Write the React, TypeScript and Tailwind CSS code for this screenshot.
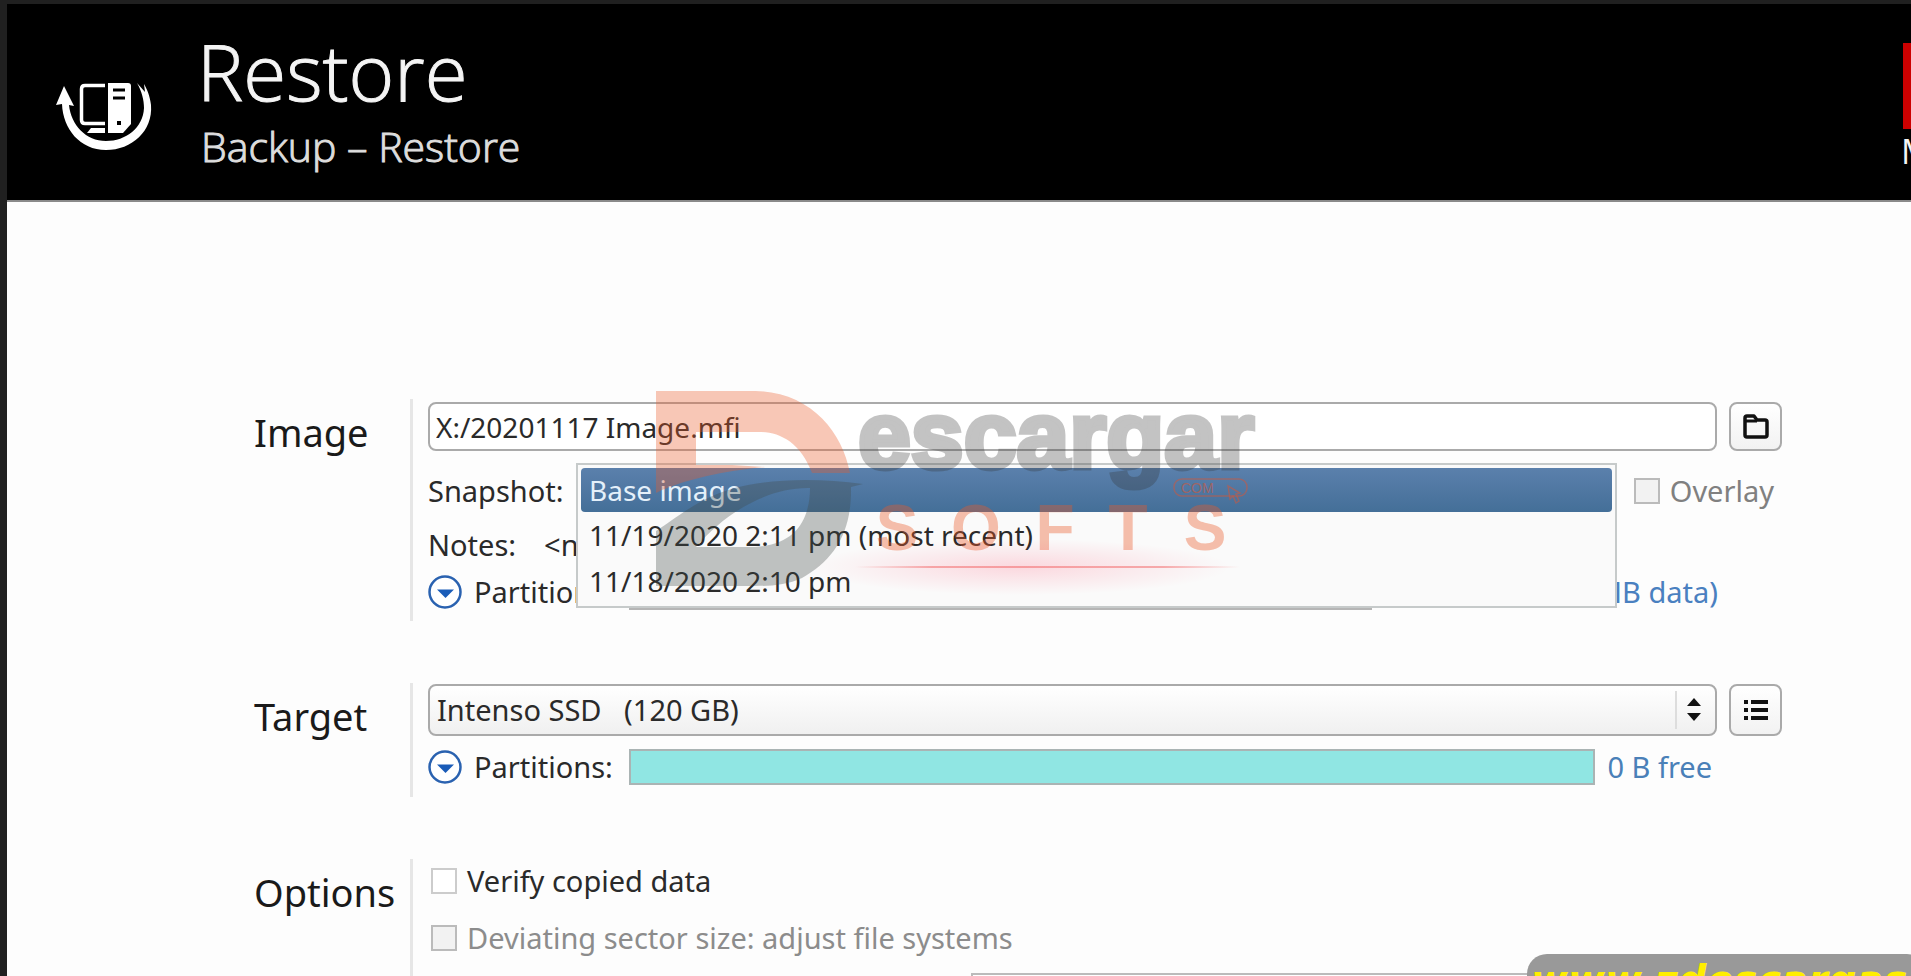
import type { ReactNode } from 'react';

const snapshots = ['Base image', '11/19/2020 2:11 pm (most recent)', '11/18/2020 2:10 pm'];

function RestoreIcon() {
  return (
    <svg width="98" height="70" viewBox="0 0 98 70" aria-hidden="true">
      <path
        d="M6 23 C7 48 24 69 50 69 C76 69 97 50 95 24 C94 15 91 8 88 3 L89 11 L81 2 C86 11 88 19 88 27 C87 47 70 60 50 60 C30 60 15 44 13 24 L18 25 L8 5 L0 24 Z"
        fill="#fff"
      />
      <path d="M49 4.500 H29 Q25.500 4.500 25.500 8 V39 Q25.500 42.500 29 42.500 H49" fill="none" stroke="#fff" strokeWidth="3.500" />
      <path d="M35 47 H49 V52 H31 Z" fill="#fff" />
      <path d="M52 2 H72 Q75 2 75 5 V43 L67 52 H52 Z" fill="#fff" />
      <path d="M57 9 H69 M57 17 H69" stroke="#000" strokeWidth="3" />
      <rect x="61" y="40" width="4" height="4" fill="#000" />
    </svg>
  );
}

function ExpandButton({ label }: { label: string }) {
  return (
    <button type="button" aria-label={label} className="size-[34px] shrink-0">
      <svg width="34" height="34" viewBox="0 0 34 34">
        <circle cx="17" cy="17" r="15.500" fill="#fff" stroke="#2a62b0" strokeWidth="2.500" />
        <path d="M9 14.500 H26 L17.500 23 Z" fill="#1a5cb8" />
      </svg>
    </button>
  );
}

function ToolButton({ label, children }: { label: string; children: ReactNode }) {
  return (
    <button
      type="button"
      aria-label={label}
      className="flex w-[53px] shrink-0 items-center justify-center rounded-lg border-2 border-[#aaa] bg-linear-to-b from-white to-[#f2f2f2]"
    >
      {children}
    </button>
  );
}

function Section({ title, className, children }: { title: string; className: string; children: ReactNode }) {
  return (
    <section className={`grid grid-cols-[156px_minmax(0,1fr)] ${className}`}>
      <h2 className="pt-2 text-[38px] leading-[50px] text-[#1a1a1a]">{title}</h2>
      <div className="border-l-[3px] border-[#e6e6e6] pl-[15px]">{children}</div>
    </section>
  );
}

function Watermark() {
  return (
    <svg
      className="pointer-events-none absolute top-[381px] left-[643px] z-20"
      width="620"
      height="230"
      viewBox="0 0 620 230"
      aria-hidden="true"
    >
      <defs>
        <radialGradient id="glow">
          <stop offset="0" stopColor="#ff5070" stopOpacity="0.2" />
          <stop offset="1" stopColor="#ff5070" stopOpacity="0" />
        </radialGradient>
        <linearGradient id="beam">
          <stop offset="0" stopColor="#f04040" stopOpacity="0" />
          <stop offset="0.2" stopColor="#f04040" stopOpacity="0.4" />
          <stop offset="0.8" stopColor="#f04040" stopOpacity="0.4" />
          <stop offset="1" stopColor="#f04040" stopOpacity="0" />
        </linearGradient>
      </defs>
      <path
        d="M6 6 H105 C160 7 192 46 200 88 H162 C151 58 130 47 110 47 H46 V80 H82 L115 82 C75 86 35 94 6 108 Z"
        fill="#eb5a28"
        fillOpacity="0.34"
      />
      <path
        d="M6 146 C25 134 50 112 85 103 C125 93 168 93 213 99 L201 102 C202 150 182 176 152 193 C137 200 122 201 105 201 H6 Z M46 162 H105 C145 160 160 135 160 103 C118 102 75 128 46 162 Z"
        fill="#404a46"
        fillOpacity="0.32"
        fillRule="evenodd"
      />
      <text
        x="208"
        y="83"
        opacity="0.29"
        fill="#333"
        stroke="#333"
        strokeWidth="5"
        fontSize="95"
        fontWeight="700"
        fontFamily="'Liberation Sans', sans-serif"
      >
        escargar
      </text>
      <text
        x="247 326 405 478 555"
        y="165"
        textAnchor="middle"
        fill="#eb5a28"
        fillOpacity="0.38"
        fontSize="64"
        fontWeight="700"
        fontFamily="'Liberation Sans', sans-serif"
      >
        SOFTS
      </text>
      <g stroke="#d0583c" strokeOpacity="0.55" fill="none" strokeWidth="1.500">
        <rect x="524" y="94" width="73" height="17" rx="8" />
        <path d="M578 101 L580 114 L583 111 L586 118 L589 116 L586 109 L590 108 Z" />
      </g>
      <text x="531" y="108" fill="#d0583c" fillOpacity="0.6" fontSize="14" fontFamily="'Liberation Sans', sans-serif">
        COM
      </text>
      <ellipse cx="370" cy="182" rx="210" ry="28" fill="url(#glow)" />
      <rect x="205" y="181" width="385" height="2" fill="url(#beam)" />
    </svg>
  );
}

export default function App() {
  return (
    <div className="relative flex h-screen flex-col overflow-hidden border-t-4 border-l-[7px] border-[#202020] bg-[#fdfdfd] font-['Noto_Sans',sans-serif] text-[29px] leading-[38px] text-[#2a2a2a]">
      <header className="relative flex h-[198px] shrink-0 border-b-2 border-[#8a8a8a] bg-black font-['Open_Sans',sans-serif] text-[#f4f4f4]">
        <div className="w-[190px] shrink-0 pt-[77px] pl-[49px]">
          <RestoreIcon />
        </div>
        <div className="pt-[21px]">
          <h1 className="text-[78px] leading-[92px] font-light [-webkit-text-stroke:1px]">Restore</h1>
          <p className="mt-1 pl-1 text-[41px] leading-[50px] font-light text-[#ddd] [-webkit-text-stroke:1px]">Backup – Restore</p>
        </div>
        <div className="absolute top-[39px] left-[calc(100%-8px)] w-[86px] whitespace-nowrap">
          <div className="h-[86px] bg-[#cc0000]" />
          <p className="-ml-0.5 text-[34px] leading-[44px]">Menu</p>
        </div>
      </header>

      <main className="flex flex-1 flex-col gap-[62px] pt-[197px] pr-[129px] pl-[247px]">
        <Section title="Image" className="h-[222px] shrink-0">
          <div className="flex gap-3 pt-[3px]">
            <input
              type="text"
              aria-label="Image"
              defaultValue="X:/20201117 Image.mfi"
              className="h-[49px] min-w-0 flex-1 rounded-lg border-2 border-[#aaa] bg-white px-1.5 text-[28px]"
            />
            <ToolButton label="Browse">
              <svg width="30" height="28" viewBox="0 0 30 28" fill="none" stroke="#111" strokeWidth="3.500" strokeLinejoin="round">
                <path d="M4 22 V5 Q4 3 6 3 H13 L16 7 H24 Q26 7 26 9 V22 Q26 24 24 24 H6 Q4 24 4 22 Z" />
                <path d="M5 8 H16" strokeWidth="3" />
              </svg>
            </ToolButton>
          </div>
          <div className="relative mt-3">
            <div className="flex h-14 items-center justify-between">
              <span id="snapshot-label">Snapshot:</span>
              <label className="flex items-center gap-2.5 pr-2 text-[#808080]">
                <input type="checkbox" disabled className="size-[26px] appearance-none border-2 border-[#bbb] bg-[#f2f2f2]" />
                Overlay
              </label>
            </div>
            <div className="flex h-[52px] items-center gap-7">
              <span>Notes:</span>
              <span>&lt;none&gt;</span>
            </div>
            <div className="flex h-[42px] items-center pr-16">
              <ExpandButton label="Show image partitions" />
              <span className="ml-3">Partitions:</span>
              <div className="ml-4 h-[36px] w-[743px] border-2 border-[#b5b5b5] bg-[#90e6e3]" />
              <a href="#data" className="ml-auto text-[#4a80c0]">(512 MB data)</a>
            </div>
            <ul
              role="listbox"
              aria-labelledby="snapshot-label"
              className="absolute top-0 right-[165px] left-[148px] z-10 h-[145px] border-2 border-[#c6caca] bg-[#fafafa] p-[3px] text-[28px]"
            >
              {snapshots.map((name, i) => (
                <li
                  key={name}
                  role="option"
                  aria-selected={i === 0}
                  className={
                    i === 0
                      ? 'h-11 rounded-sm bg-linear-to-b from-[#5b80ac] to-[#446f98] px-2 leading-[44px] text-[#e4f0fa]'
                      : 'h-[46px] px-2 leading-[46px]'
                  }
                >
                  {name}
                </li>
              ))}
            </ul>
          </div>
        </Section>

        <Section title="Target" className="h-[114px] shrink-0">
          <div className="flex gap-3 pt-px">
            <div className="relative min-w-0 flex-1">
              <select
                aria-label="Target"
                className="h-[52px] w-full appearance-none rounded-lg border-2 border-[#aaa] bg-linear-to-b from-white to-[#f0f0f0] px-[7px]"
              >
                <option>{'Intenso SSD\u00a0\u00a0\u00a0(120 GB)'}</option>
              </select>
              <svg className="pointer-events-none absolute top-1.5 right-2" width="34" height="40" viewBox="0 0 34 40">
                <path d="M1 1 V39" stroke="#ddd" strokeWidth="2" />
                <path d="M12 16 L19 8 L26 16 Z M12 23 L19 31 L26 23 Z" fill="#111" />
              </svg>
            </div>
            <ToolButton label="List">
              <svg width="26" height="24" viewBox="0 0 26 24" stroke="#111" strokeWidth="4">
                <path d="M1 4 H5 M8 4 H25 M1 12 H5 M8 12 H25 M1 20 H5 M8 20 H25" />
              </svg>
            </ToolButton>
          </div>
          <div className="mt-3 flex items-center">
            <ExpandButton label="Show target partitions" />
            <span className="ml-3">Partitions:</span>
            <div className="ml-4 h-[36px] flex-1 border-2 border-[#aab4b4] bg-[#90e6e3]" />
            <a href="#free" className="mr-[70px] ml-3 text-[#4a80b8]">0 B free</a>
          </div>
        </Section>

        <Section title="Options" className="flex-1">
          <div className="pt-[3px] pl-[3px]">
            <label className="flex items-center gap-2.5">
              <input type="checkbox" className="size-[26px] appearance-none border-2 border-[#ccc] bg-white" />
              Verify copied data
            </label>
            <label className="mt-[19px] flex items-center gap-2.5 text-[#8c8c8c]">
              <input type="checkbox" disabled className="size-[26px] appearance-none border-2 border-[#bbb] bg-[#f2f2f2]" />
              Deviating sector size: adjust file systems
            </label>
            <div className="mt-4 mr-16 ml-[540px] h-10 border-2 border-[#bbb] bg-white" />
          </div>
        </Section>
      </main>

      <Watermark />

      <div className="absolute -right-4 -bottom-8 z-20 h-[54px] w-[400px] rounded-[20px] bg-[#999] pl-1 font-['DejaVu_Sans',sans-serif] text-[40px] leading-[52px] font-bold whitespace-nowrap text-[#ffee00] italic">
        www.zdescargas
      </div>
    </div>
  );
}
